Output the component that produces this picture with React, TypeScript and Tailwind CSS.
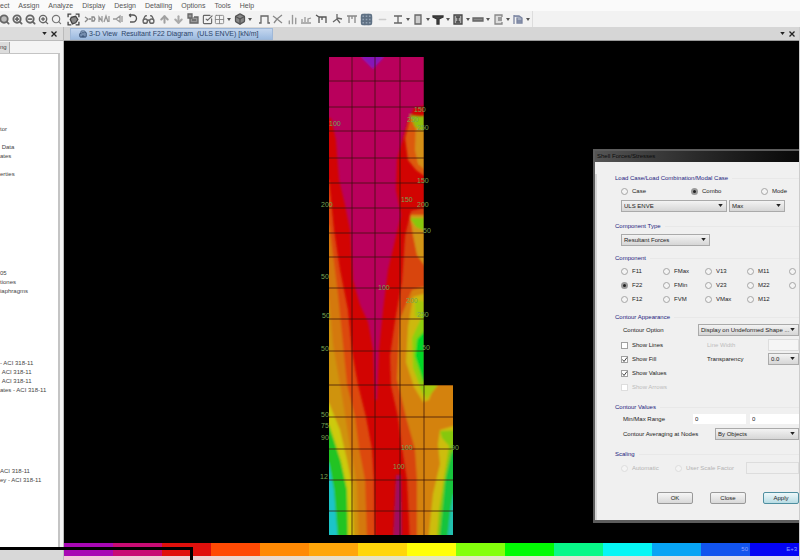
import React from "react";
import type { ReactNode } from "react";
import {
  ArrowDown, ArrowUp, Box, ChartNoAxesColumn, CheckSquare, Glasses, Grid3x3,
  Minus, ZoomIn, ZoomOut, Search, Building2, Grid2x2,
} from "lucide-react";

const menus = ["ect", "Assign", "Analyze", "Display", "Design", "Detailing", "Options", "Tools", "Help"];

const treeRows = [
  "tor", "", "\u00a0Data", "ates", "", "erties", "", "", "", "", "", "", "", "", "", "", "05", "tiones", "iaphragms",
  "", "", "", "", "", "", "", "- ACI 318-11", "\u00a0ACI 318-11", "\u00a0ACI 318-11", "ates - ACI 318-11",
  "", "", "", "", "", "", "", "", "ACI 318-11", "ey - ACI 318-11",
];

function Glyph({ d, fill = "none" }: { d: string; fill?: string }) {
  return (
    <svg viewBox="0 0 12 12" className="size-[12px]" fill={fill} stroke="currentColor" strokeWidth="1.3">
      <path d={d} />
    </svg>
  );
}

const ic = "size-[11px]";
type Tool = { name: string; w: string; icon: ReactNode; drop?: boolean };

const tools: Tool[] = [
  { name: "Zoom window", w: "w-[13px]", icon: <Search className={ic} strokeWidth={4} fill="#bbb" /> },
  { name: "Zoom in", w: "w-[13px]", icon: <ZoomIn className={ic} strokeWidth={4} /> },
  { name: "Zoom out", w: "w-[13px]", icon: <ZoomOut className={ic} strokeWidth={4} /> },
  { name: "Zoom previous", w: "w-[13px]", icon: <ZoomIn className={ic} strokeWidth={3} /> },
  { name: "Zoom full", w: "w-[13px] text-[#777]", icon: <Search className={ic} strokeWidth={2.5} /> },
  {
    name: "Pan", w: "w-[20px] text-[#444]",
    icon: (
      <svg viewBox="0 0 12 12" className="size-[13px]" fill="none" stroke="currentColor" strokeWidth="1.2">
        <path d="M1 4V1h3M8 1h3v3M11 8v3H8M4 11H1V8" />
        <path d="M3 6l1-2 4-1 2 3-2 3-3 1z" fill="#8a8a8a" />
      </svg>
    ),
  },
  { name: "3-d", w: "w-[14px] text-[#888]", icon: <Glyph d="M1 4 4 6 1 9M5 6h2M8 8V4h2l1 2-1 2z" /> },
  { name: "Plan", w: "w-[14px] text-[#999]", icon: <Glyph d="M1 9V4l3 4V3M6 9l2-6 2 6M11 3v6" /> },
  { name: "Elevation", w: "w-[14px] text-[#999]", icon: <Glyph d="M1 6h3l4-3v6L4 6M10 3v6" /> },
  { name: "Rotate view", w: "w-[14px] text-[#555]", icon: <Glyph d="M3 2h4a3.500 3.500 0 010 7H4M3 2l2-1M3 2l2 2" /> },
  { name: "Perspective", w: "w-[18px]", icon: <Glasses className="size-[13px]" strokeWidth={2.5} /> },
  { name: "Up", w: "w-[14px] text-[#a0a0a0]", icon: <ArrowUp className={ic} strokeWidth={4.5} /> },
  { name: "Down", w: "w-[14px] text-[#aaa]", icon: <ArrowDown className={ic} strokeWidth={4.5} /> },
  { name: "Shrink objects", w: "w-[16px]", icon: <Glyph d="M1 1h4v4H1zM3 5v5h8V4H7M5 7h4" fill="#999" /> },
  { name: "Display options", w: "w-[13px]", icon: <CheckSquare className={ic} strokeWidth={2.5} /> },
  { name: "Assign view", w: "w-[20px] text-[#888]", icon: <Grid2x2 className={ic} strokeWidth={2} />, drop: true },
  { name: "Object view", w: "w-[23px] text-[#555]", icon: <Box className="size-[12px]" fill="#888" strokeWidth={2.5} />, drop: true },
  { name: "Undeformed", w: "w-[14px]", icon: <Glyph d="M1 10h2V3h7v7h2" /> },
  { name: "Loads", w: "w-[14px] text-[#888]", icon: <Glyph d="M1 3l4 3 5-4M5 6l-3 4M5 6l5 4" /> },
  { name: "Deformed", w: "w-[14px] text-[#999]", icon: <ChartNoAxesColumn className={ic} strokeWidth={3} /> },
  { name: "Reactions", w: "w-[14px] text-[#999]", icon: <Glyph d="M1 10h10M2 9V6M5 9V4M8 9V6l3-1" /> },
  { name: "Forces", w: "w-[16px] text-[#555]", icon: <Glyph d="M1 2l3 2h7v6M4 4v6M7 4v3" /> },
  { name: "Energy", w: "w-[16px]", icon: <Glyph d="M6 1v5L2 9M6 5l5 1M6 6l3 4" /> },
  { name: "Frame", w: "w-[14px] text-[#888]", icon: <Glyph d="M1 3h10M3 3v7M9 3v7M6 3v3" /> },
  { name: "Table", w: "w-[14px] text-[#5f7184]", icon: <Grid3x3 className="size-[13px]" fill="#94a3b4" strokeWidth={3} /> },
  { name: "More", w: "w-[19px] text-[#ccc]", icon: <Minus className={ic} strokeWidth={3} /> },
  { name: "Steel frame", w: "w-[20px]", icon: <Glyph d="M2 3h8M6 3v7M2 10h8" />, drop: true },
  { name: "Concrete frame", w: "w-[20px]", icon: <Glyph d="M3 2h6v9H3z" fill="#ccc" />, drop: true },
  { name: "Composite beam", w: "w-[20px] text-[#333]", icon: <Glyph d="M1 3h10v1L7 6v5H5V6L1 4z" fill="#444" />, drop: true },
  { name: "Composite column", w: "w-[20px] text-[#444]", icon: <Glyph d="M2 2h8v9H2zM4 4h4M6 4v5M4 9h4" fill="#aaa" />, drop: true },
  { name: "Joist", w: "w-[20px] text-[#666]", icon: <Glyph d="M1 5h10v3H1z" fill="#888" />, drop: true },
  { name: "Shear wall", w: "w-[20px] text-[#888]", icon: <Glyph d="M10 4V2H3v9h7V9M6 5h4M6 7h4" fill="#ddd" />, drop: true },
  { name: "Slab", w: "w-[20px] text-[#7a84a0]", icon: <Glyph d="M2 2v9M2 3h5l3 2v5H5V5M5 8h5" fill="#a5aec0" />, drop: true },
];

function Caret({ className = "" }: { className?: string }) {
  return (
    <svg viewBox="0 0 6 4" className={`h-[3px] w-[5px] shrink-0 ${className}`} fill="#222">
      <path d="M0 0h6L3 4z" />
    </svg>
  );
}

function PanelButtons() {
  return (
    <div className="flex items-center gap-1">
      <button aria-label="Panel menu" className="flex w-[5px] justify-center"><Caret /></button>
      <button aria-label="Close panel" className="flex">
        <svg viewBox="0 0 6 6" className="size-[6px]" stroke="#222" strokeWidth="1.3"><path d="M.5.5l5 5M5.500.5l-5 5" /></svg>
      </button>
    </div>
  );
}

const rows = [81, 107, 131, 158, 183, 208, 233, 257, 288, 319, 351, 385, 417, 449, 480, 511];

const labels: [number, number, string][] = [
  [329, 126, "100"], [414, 112, "150"], [407, 122, "250"], [417, 130, "250"], [417, 183, "150"],
  [401, 202, "150"], [417, 207, "200"], [321, 207, "200"], [423, 233, "50"], [321, 279, "50"],
  [378, 290, "100"], [406, 303, "200"], [322, 318, "50"], [417, 317, "250"], [321, 351, "50"], [422, 350, "50"],
  [321, 417, "50"], [321, 428, "75"], [321, 440, "90"], [401, 450, "100"], [393, 469, "100"],
  [451, 450, "90"], [320, 479, "12"],
];

function Contour() {
  return (
    <svg viewBox="319 55 142 482" className="h-[482px] w-[142px] shrink-0" role="img" aria-label="Resultant F22 contour plot">
      <defs>
        <clipPath id="wall"><path d="M329 57h95v328h29v150H329z" /></clipPath>
        <filter id="band" x="-10%" y="-10%" width="120%" height="120%"><feGaussianBlur stdDeviation="1.2" /></filter>
      </defs>
      <g clipPath="url(#wall)">
        <path d="M320 50h140v490H320z" fill="#d20402" />
        <g filter="url(#band)">
          <path d="M320 50h110v54L414 108 408 120 401 145 397 160 396 190 401 215 394 245 388 270 383 310 379 350 377 400H375L373 350 368 322 360 305 353 280 350 230 345 205 339 180 336 140 331 118H320z" fill="#b9045c" />
          <path d="M362 50h21v8l-10 11-11-11z" fill="#8512b8" />
          <path d="M396 475h5l1 65h-9z" fill="#a01060" />
          {/* left flank */}
          <path d="M320 180h9l5 50 6 40 8 40 4 41 6 34 8 32 6 32 2 31 1 60H320z" fill="#dc4a0c" />
          <path d="M320 225h9l4 30 5 40 5 50 4 40 8 32 4 32 6 31 2 60H320z" fill="#d4790e" />
          <path d="M320 300h9l4 45 8 45 8 50 8 45 2 60H320z" fill="#cf930e" />
          <path d="M320 403h9l11 27 7 30 5 25 2 60H320z" fill="#cdca10" />
          <path d="M320 425h9l5 15 7 22 6 28 1 55H320z" fill="#22c422" />
          <path d="M320 463h9l5 27 4 50H320z" fill="#1cc4c8" />
          {/* right flank */}
          <path d="M430 114l-20 4-5 20 3 22 8 10 14 10z" fill="#dc5a10" />
          <path d="M430 120l-14 2-1 28 3 14 12 10z" fill="#d49018" />
          <path d="M430 117l-20-2 5 12 15 7z" fill="#90c010" />
          <path d="M470 208H424l-13 3-6 25-3 45-7 40-5 35 1 30 7 31 4 32 5 31 3 65h60z" fill="#d8440e" />
          <path d="M430 215h-20l3 20 4 20 13 18z" fill="#d29616" />
          <path d="M430 218h-20l6 9 14 6z" fill="#86c80c" />
          <path d="M430 285l-18 5-12 29-3 60 9 38 9 32 2 31v65h60V375H424z" fill="#d4820e" />
          <path d="M430 292l-17 5-5 30-2 35 8 25 9 15 6-2 9-25z" fill="#ceb80e" />
          <path d="M430 302l-15-2 0 16 15 6z" fill="#a4c80c" />
          <path d="M424 312l-12 26 1 30 11 29 8-20V312z" fill="#8ed010" />
          <path d="M430 325l-13 14-2 17 8 25 7 5z" fill="#06d828" />
          <path d="M424 380l2 20 12-15z" fill="#a4c80c" />
          <path d="M460 424l-20 6-2 14 2 20-7 30-5 50h40z" fill="#cdbd10" />
          <path d="M460 430l-20 1 2 7 7 8-5 32-5 32-3 40h30z" fill="#86c80c" />
          <path d="M460 440l-9 14-6 27-3 32-3 30h30z" fill="#14c43c" />
          <path d="M460 490l-7 5-3 18-3 30h20z" fill="#24c0b0" />
        </g>
        <g stroke="#3a1208" strokeOpacity=".75" strokeWidth="1">
          {[352, 375, 400, 424].map((x) => <path key={x} d={`M${x} 57V535`} />)}
          {rows.map((y) => <path key={y} d={`M329 ${y}H453`} />)}
        </g>
      </g>
      <g fill="#76a552" fontSize="7" fontFamily="Liberation Sans, Arial, sans-serif">
        {labels.map(([x, y, t]) => <text key={`${x}-${y}`} x={x} y={y}>{t}</text>)}
      </g>
    </svg>
  );
}

function Heading({ children, className }: { children: ReactNode; className: string }) {
  return (
    <h2 className={`flex h-2 items-center gap-1 text-[#23237e] ${className}`}>
      <span className="whitespace-nowrap">{children}</span>
      <span className="h-px flex-1 bg-[#e8e8e8]" />
    </h2>
  );
}

const radioStyle =
  "size-[7px] shrink-0 appearance-none rounded-full border border-[#a5a5a5] bg-[#f4f4f4] checked:border-2 checked:border-[#999] checked:bg-[#222] disabled:border-[#ddd]";

function Radio({ label, group, on = false, disabled = false }: { label: string; group: string; on?: boolean; disabled?: boolean }) {
  return (
    <label className={`flex items-center gap-1 whitespace-nowrap ${disabled ? "text-[#b4b4b4]" : ""}`}>
      <input type="radio" name={group} defaultChecked={on} disabled={disabled} className={radioStyle} />
      {label}
    </label>
  );
}

function Check({ label, on = false, disabled = false }: { label: string; on?: boolean; disabled?: boolean }) {
  return (
    <label className={`flex h-3.5 items-center gap-1 whitespace-nowrap ${disabled ? "text-[#bcbcbc]" : ""}`}>
      <span className="relative flex size-[7px] shrink-0">
        <input type="checkbox" defaultChecked={on} disabled={disabled}
          className="size-[7px] appearance-none border border-[#a0a0a0] bg-white disabled:border-[#ddd]" />
        {on && (
          <svg viewBox="0 0 7 7" className="pointer-events-none absolute inset-0" fill="none" stroke="#444"><path d="M1.500 3.500l1.500 2 3-4" /></svg>
        )}
      </span>
      {label}
    </label>
  );
}

function Pick({ label, value, className }: { label: string; value: string; className: string }) {
  return (
    <span className={`relative flex h-3 shrink-0 ${className}`}>
      <select aria-label={label} className="w-full appearance-none border border-[#aaa] bg-linear-to-b from-[#f3f3f3] to-[#d6d6d6] pl-0.5 leading-[9px]">
        <option>{value}</option>
      </select>
      <Caret className="pointer-events-none absolute top-1 right-1" />
    </span>
  );
}

const components = ["F11", "FMax", "V13", "M11", "", "F22", "FMin", "V23", "M22", "", "F12", "FVM", "VMax", "M12"];

function Dialog() {
  return (
    <section aria-label="Shell Forces/Stresses"
      className="absolute top-[108px] right-0 w-[206px] overflow-hidden border-2 border-r-0 border-b-3 border-[#5c5c5c] bg-[#f0f0f0] text-[6px] leading-[8px] text-[#222]">
      <h1 className="h-[11px] bg-linear-to-r from-[#555] via-[#2a2a2a] to-[#080808] pl-0.5 leading-[11px] text-[#0b0b0b]">Shell Forces/Stresses</h1>
      <form className="border-l-2 border-[#d5d5d5] pb-4 pl-[18px]" onSubmit={(e) => e.preventDefault()}>
        <Heading className="mt-3">Load Case/Load Combination/Modal Case</Heading>
        <div className="mt-0.5 ml-1.5 grid h-3.5 grid-cols-[70px_70px_auto] items-center">
          <Radio label="Case" group="case" />
          <Radio label="Combo" group="case" on />
          <Radio label="Mode" group="case" />
        </div>
        <div className="mt-0.5 ml-1.5 flex gap-0.5">
          <Pick label="Combination" value="ULS ENVE" className="w-[106px]" />
          <Pick label="Envelope" value="Max" className="w-14" />
        </div>
        <Heading className="mt-2.5">Component Type</Heading>
        <div className="mt-1 ml-1.5"><Pick label="Component type" value="Resultant Forces" className="w-[89px]" /></div>
        <Heading className="mt-2">Component</Heading>
        <div className="mt-0.5 ml-1.5 grid auto-rows-[14px] grid-cols-[repeat(5,42px)] items-center">
          {components.map((c, i) =>
            c ? (
              <Radio key={c} label={c} group="component" on={c === "F22"} />
            ) : (
              <input key={i} type="radio" name="component" aria-label="Other component" className={radioStyle} />
            ),
          )}
        </div>
        <Heading className="mt-[7px]">Contour Appearance</Heading>
        <div className="mt-0.5 ml-2 flex h-3.5 items-center justify-between">
          <span>Contour Option</span>
          <Pick label="Contour option" value="Display on Undeformed Shape ..." className="w-[101px]" />
        </div>
        <div className="mt-px ml-1.5 flex">
          <div className="flex-1">
            <Check label="Show Lines" />
            <Check label="Show Fill" on />
            <Check label="Show Values" on />
            <Check label="Show Arrows" disabled />
          </div>
          <div className="w-[92px]">
            <label className="flex h-3.5 items-center justify-between text-[#bcbcbc]">
              Line Width
              <input disabled className="h-3 w-[31px] border border-[#ddd] bg-[#f5f5f5]" />
            </label>
            <div className="flex h-3.5 items-center justify-between">
              <span>Transparency</span>
              <Pick label="Transparency" value="0.0" className="w-[31px]" />
            </div>
          </div>
        </div>
        <Heading className="mt-[9px]">Contour Values</Heading>
        <div className="mt-px ml-2 flex h-3.5 items-center">
          <label htmlFor="min" className="w-[70px]">Min/Max Range</label>
          <input id="min" defaultValue="0" className="h-2.5 w-[53px] min-w-0 bg-white pl-0.5" />
          <input aria-label="Maximum" defaultValue="0" className="ml-1 h-2.5 min-w-0 flex-1 bg-white pl-0.5" />
        </div>
        <div className="mt-px ml-2 flex h-3.5 items-center justify-between">
          <span>Contour Averaging at Nodes</span>
          <Pick label="Contour averaging" value="By Objects" className="w-[84px]" />
        </div>
        <Heading className="mt-[9px]">Scaling</Heading>
        <div className="mt-[3px] ml-1.5 flex h-3.5 items-center">
          <span className="w-[54px]"><Radio label="Automatic" group="scale" disabled /></span>
          <Radio label="User Scale Factor" group="scale" disabled />
          <input aria-label="Scale factor" disabled className="ml-auto h-3 w-[53px] border border-[#ddd]" />
        </div>
        <div className="mt-[17px] flex justify-end gap-[17px]">
          <button className="h-3 w-9 rounded-xs border border-[#999] bg-linear-to-b from-[#f6f6f6] to-[#d8d8d8]">OK</button>
          <button className="h-3 w-9 rounded-xs border border-[#999] bg-linear-to-b from-[#f6f6f6] to-[#d8d8d8]">Close</button>
          <button className="h-3 w-9 rounded-xs border border-[#4f8fa0] bg-linear-to-b from-[#eef8fa] to-[#b8dce4]">Apply</button>
        </div>
      </form>
    </section>
  );
}

const legend = [
  "bg-[#a808b4]", "bg-[#c80c74]", "bg-[#e0100c]", "bg-[#ff4a04]", "bg-[#ff8a04]", "bg-[#ffa60a]", "bg-[#ffd60a]", "bg-[#ffff08]",
  "bg-[#84ff0c]", "bg-[#02fb04]", "bg-[#08f888]", "bg-[#06f6f4]", "bg-[#08a4f4]", "bg-[#1254ee]", "bg-[#0404f4]",
];

export default function App() {
  return (
    <div className="relative flex h-screen flex-col overflow-hidden bg-[#f5f5f5] font-['Liberation_Sans',Arial,sans-serif] text-[#444]">
      <nav className="flex h-[11px] shrink-0 items-center gap-[9px] bg-[#fafafa] text-[7px] leading-[10px] text-[#555]">
        {menus.map((m) => <button key={m}>{m}</button>)}
      </nav>
      <div role="toolbar" className="flex h-4 shrink-0 items-center bg-[#f2f2f2] text-[#666]">
        <div className="-ml-0.5 flex h-full shrink-0 items-center border-r border-[#ddd]">
          {tools.map((t) => (
            <button key={t.name} aria-label={t.name} className={`flex shrink-0 items-center ${t.drop ? "gap-0.5" : "justify-center"} ${t.w}`}>
              {t.icon}
              {t.drop && <svg viewBox="0 0 4 3" className="h-[3px] w-1 shrink-0" fill="#555"><path d="M0 0h4L2 3z" /></svg>}
            </button>
          ))}
        </div>
      </div>
      <div className="flex min-h-0 flex-1">
        <aside className="flex w-16 shrink-0 flex-col border-r border-[#bbb] bg-[#f4f4f4]">
          <div className="flex h-[13px] items-center justify-end bg-[#dcdcdc] pr-1.5"><PanelButtons /></div>
          <div className="flex h-[13px] items-end border-t border-[#bbb]">
            <button className="h-[11px] border-r border-[#aaa] bg-[#dcdcdc] pr-0.5 text-[6px]">ng</button>
          </div>
          <ul className="mr-[3px] flex-1 overflow-hidden border-t border-r-2 border-[#c4c4c4] bg-white pt-[71px] text-[6px] leading-[9px]">
            {treeRows.map((r, i) => <li key={i} className="h-[9px] whitespace-nowrap">{r}</li>)}
          </ul>
          <div className="h-3 bg-[#d8d8d8]" />
        </aside>
        <main className="flex min-w-0 flex-1 flex-col border-r border-[#ccc]">
          <div className="flex h-3.5 shrink-0 items-center justify-between border-b border-[#999] bg-[#d6d6d6] pr-1 pl-1.5">
            <button className="flex h-3 w-[203px] items-center gap-0.5 border border-[#9fb8d8] bg-linear-to-b from-[#c4d6ee] to-[#9dbbe0] pl-2 text-[7px] leading-[10px] whitespace-nowrap text-[#2c4468]">
              <Building2 className="size-[8px] shrink-0" strokeWidth={2.5} />
              3-D View&nbsp; Resultant F22 Diagram&nbsp; (ULS ENVE) [kN/m]
            </button>
            <PanelButtons />
          </div>
          <div className="relative flex min-h-0 flex-1 bg-black pt-3.5 pl-[255px]">
            <Contour />
            <Dialog />
          </div>
          <div className="flex h-[13px] shrink-0 text-[6px] leading-[13px] text-[#8ca0ff]">
            {legend.map((c, i) => (
              <span key={c} className={`flex-1 pr-0.5 text-right ${c}`}>
                {i === 13 ? "50" : i === 14 ? "E+3" : ""}
              </span>
            ))}
          </div>
          <div className="h-1 shrink-0 bg-linear-to-r from-[#f2c6dc] via-[#e4e8c0] to-[#dcdcf4]" />
        </main>
      </div>
      <div className="pointer-events-none absolute bottom-0 left-0 h-[13px] w-[193px] border-t-3 border-r-3 border-black" />
    </div>
  );
}
